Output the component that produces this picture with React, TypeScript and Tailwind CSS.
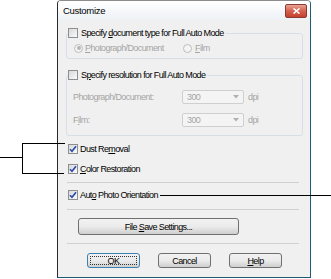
import React from "react";

const U = ({ children }: { children: React.ReactNode }) => <span className="underline underline-offset-1">{children}</span>;

const CheckBox = ({ checked = false, disabled = false }: { checked?: boolean; disabled?: boolean }) => (
  <span
    className={`relative inline-flex h-[10px] w-[10px] shrink-0 items-center justify-center border ${
      disabled ? "border-[#b8b8b8]" : "border-[#8f8f8f]"
    } bg-gradient-to-br from-[#d6d8dc] to-[#fbfbfb]`}
  >
    {checked && (
      <svg width="8" height="8" viewBox="0 0 8 8">
        <path d="M1 4.2 L3 6.3 L7 1.2" fill="none" stroke="#2b4aa8" strokeWidth="1.6" />
      </svg>
    )}
  </span>
);

const Radio = ({ selected = false }: { selected?: boolean }) => (
  <span className="inline-flex h-[9px] w-[9px] shrink-0 items-center justify-center rounded-full border border-[#bdbdbd] bg-[#f4f4f4]">
    {selected && <span className="h-[4px] w-[4px] rounded-full bg-[#b5b5b5]" />}
  </span>
);

const Combo = () => (
  <div className="flex h-[14px] w-[62px] items-center justify-between rounded-[2px] border border-[#cfcfcf] bg-[#f4f4f4] pl-[4px] pr-[4px] text-[#a5a5a5]">
    <span>300</span>
    <svg width="6" height="4" viewBox="0 0 6 4">
      <path d="M0 0 H6 L3 3.5 Z" fill="#b0b0b0" />
    </svg>
  </div>
);

const Btn = ({ children, focus = false, className = "" }: { children: React.ReactNode; focus?: boolean; className?: string }) => (
  <div
    className={`flex items-center justify-center rounded-[3px] border ${
      focus ? "border-[#3c7fb1]" : "border-[#707070]"
    } bg-gradient-to-b from-[#f2f2f2] via-[#ebebeb] to-[#cfcfcf] ${className}`}
  >
    {focus ? (
      <span className="flex h-[calc(100%-4px)] w-[calc(100%-4px)] items-center justify-center border border-dotted border-[#333]">
        <span>{children}</span>
      </span>
    ) : (
      <span>{children}</span>
    )}
  </div>
);

const Sep = () => <div className="ml-[9px] w-[232px] border-t border-[#d0d0d0]" />;

export default function App() {
  return (
    <div className="relative h-[279px] w-[331px] bg-white font-['Liberation_Sans',sans-serif] text-[9px] leading-[12px] tracking-[-0.6px] text-black">
      <div className="ml-[57px] flex h-[278px] w-[254px] flex-col rounded-t-[4px] border border-t-[#8c8c8c] border-l-[#2a2a2a] border-r-[#1d5d74] border-b-[#1d5d74] bg-[#f0f0f0]">
        {/* title bar */}
        <div className="flex h-[19px] items-center justify-between rounded-t-[3px] bg-gradient-to-b from-[#ffffff] to-[#eef2f6] pl-[5px] pr-[3px]">
          <span className="text-[9.5px] tracking-[-0.3px]">Customize</span>
          <div className="flex h-[14px] w-[22px] items-center justify-center rounded-[2px] border border-[#8a3b33] bg-gradient-to-b from-[#e9a295] via-[#d5604e] to-[#c5412d]">
            <svg width="7" height="6" viewBox="0 0 7 6">
              <path d="M0.5 0.5 L6.5 5.5 M6.5 0.5 L0.5 5.5" stroke="#fff" strokeWidth="1.6" />
            </svg>
          </div>
        </div>

        <div className="flex flex-col px-[8px] pt-[7px]">
          {/* group 1 */}
          <fieldset className="mr-[-1px] rounded-[3px] border border-[#d5dfe5] px-[7px] pb-[4px] pt-[3px]">
            <legend className="ml-[-6px] flex items-center gap-[3px] bg-[#f0f0f0] pr-[2px]">
              <CheckBox />
              <span>
                Specify <U>d</U>ocument type for Full Auto Mode
              </span>
            </legend>
            <div className="flex h-[12px] items-center text-[#a5a5a5]">
              <Radio selected />
              <span className="ml-[2px] w-[98px]">
                <U>P</U>hotograph/Document
              </span>
              <Radio />
              <span className="ml-[3px]">
                <U>F</U>ilm
              </span>
            </div>
          </fieldset>

          {/* group 2 */}
          <fieldset className="mr-[-1px] mt-[10px] rounded-[3px] border border-[#d5dfe5] pb-[8px] pl-[6px] pr-[7px] pt-[9px]">
            <legend className="ml-[-5px] flex items-center gap-[3px] bg-[#f0f0f0] pr-[2px]">
              <CheckBox />
              <span>
                S<U>p</U>ecify resolution for Full Auto Mode
              </span>
            </legend>
            <div className="flex flex-col gap-[9px] text-[#a5a5a5]">
              <div className="flex items-center">
                <span className="w-[109px]">Photograph/Document:</span>
                <Combo />
                <span className="ml-[4px]">dpi</span>
              </div>
              <div className="flex items-center">
                <span className="w-[109px]">
                  F<U>i</U>lm:
                </span>
                <Combo />
                <span className="ml-[4px]">dpi</span>
              </div>
            </div>
          </fieldset>
        </div>

        <div className="mt-[7px] flex flex-col">
          <div className="ml-[10px] flex h-[12px] items-center gap-[2px]">
            <CheckBox checked />
            <span>
              Dust Re<U>m</U>oval
            </span>
          </div>
          <div className="ml-[10px] mt-[8px] flex h-[12px] items-center gap-[2px]">
            <CheckBox checked />
            <span>
              <U>C</U>olor Restoration
            </span>
          </div>
          <div className="mt-[7px]">
            <Sep />
          </div>
          <div className="ml-[10px] mt-[6px] flex h-[12px] items-center gap-[2px]">
            <CheckBox checked />
            <span>
              Aut<U>o</U> Photo Orientation
            </span>
          </div>
          <div className="mt-[8px]">
            <Sep />
          </div>
          <Btn className="ml-[20px] mt-[8px] h-[17px] w-[161px]">
            File <U>S</U>ave Settings...
          </Btn>
          <div className="mt-[8px]">
            <Sep />
          </div>
          <div className="ml-[29px] mt-[9px] flex gap-[18px]">
            <Btn focus className="h-[15px] w-[53px]">
              OK
            </Btn>
            <Btn className="h-[15px] w-[53px]">Cancel</Btn>
            <Btn className="h-[15px] w-[53px]">
              <U>H</U>elp
            </Btn>
          </div>
        </div>
      </div>

      {/* callout lines */}
      <div className="absolute left-0 top-[157px] h-px w-[22px] bg-black" />
      <div className="absolute left-[22px] top-[143px] h-[31px] w-px bg-black" />
      <div className="absolute left-[22px] top-[143px] h-px w-[43px] bg-black" />
      <div className="absolute left-[22px] top-[173px] h-px w-[42px] bg-black" />
      <div className="absolute left-[160px] top-[195px] h-px w-[171px] bg-black" />
    </div>
  );
}
